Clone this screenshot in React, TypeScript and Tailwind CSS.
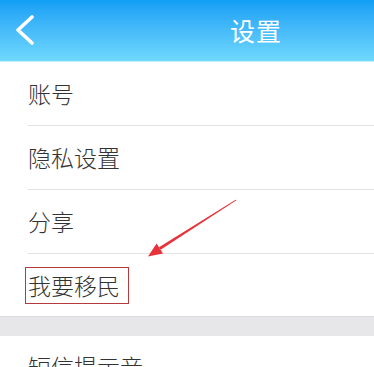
const items = ['账号', '隐私设置', '分享'];

const font = { fontFamily: '"Noto Sans CJK SC", "Noto Sans", sans-serif' };

export default function App() {
  return (
    <div className="relative w-[374px] h-[367px] overflow-hidden bg-white" style={font}>
      {/* Header */}
      <header className="flex items-center h-[62px] px-[15px] bg-gradient-to-b from-[#0f9ef5] to-[#6ed8fd] border-b border-[#c9ecf9]">
        <svg width="20" height="32" viewBox="0 0 20 32" fill="none" className="shrink-0">
          <path d="M17 2 L3 15 L17 28" stroke="white" strokeWidth="3.6" strokeLinecap="round" strokeLinejoin="round" />
        </svg>
        <h1 className="ml-[195px] text-[25px] leading-none text-white tracking-[1px]">设置</h1>
      </header>

      {/* List */}
      <ul>
        {items.map((t) => (
          <li key={t} className="pl-[28px]">
            <div className="h-[64px] flex items-center text-[23px] font-light text-[#333] border-b border-[#e3e3e5]">
              {t}
            </div>
          </li>
        ))}
        <li className="h-[62px] flex items-center pl-[25px]">
          <span className="w-[104px] h-[37px] pl-[2px] flex items-center border border-[#b8393b] text-[23px] font-light text-[#333]">
            我要移民
          </span>
        </li>
      </ul>

      <div className="h-[20px] bg-[#e7e7e9] border-t border-[#dcdcde]" />

      <div className="pl-[28px] pt-[14px] text-[23px] font-light text-[#333] leading-[32px]">短信提示音</div>

      {/* Annotation arrow */}
      <svg className="absolute left-0 top-0 pointer-events-none" width="374" height="367" viewBox="0 0 374 367">
        <polygon points="236.4,200.3 235.6,199.7 159.0,247.2 160.6,249.8" fill="#e8323a" />
        <polygon points="148,256.5 163.0,253.6 156.6,243.4" fill="#e8323a" />
      </svg>
    </div>
  );
}
